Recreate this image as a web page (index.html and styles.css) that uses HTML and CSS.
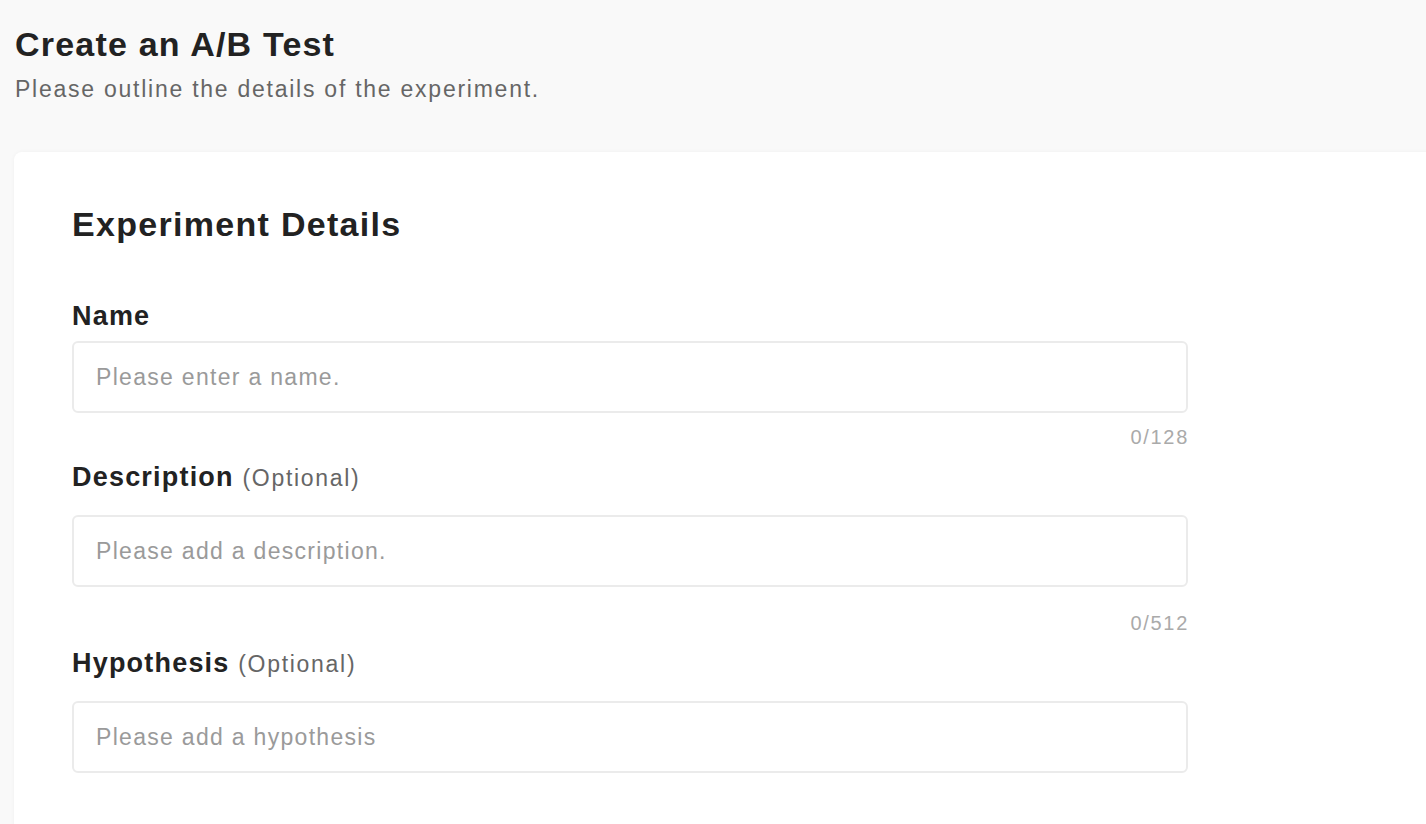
FILE: index.html
```html
<!DOCTYPE html>
<html lang="en">
<head>
<meta charset="utf-8">
<title>Create an A/B Test</title>
<link rel="stylesheet" href="styles.css">
</head>
<body>
<div class="page">
  <header class="page-header">
    <h1 class="page-title">Create an A/B Test</h1>
    <p class="page-subtitle">Please outline the details of the experiment.</p>
  </header>
  <section class="card">
    <h2 class="card-title">Experiment Details</h2>
    <form class="form">
      <div class="field">
        <label class="field-label" for="name">Name</label>
        <input class="field-input" id="name" type="text" placeholder="Please enter a name.">
        <div class="field-counter">0/128</div>
      </div>
      <div class="field">
        <label class="field-label field-label--optional" for="desc">Description <span class="optional">(Optional)</span></label>
        <input class="field-input" id="desc" type="text" placeholder="Please add a description.">
        <div class="field-counter field-counter--spaced">0/512</div>
      </div>
      <div class="field">
        <label class="field-label field-label--optional" for="hyp">Hypothesis <span class="optional">(Optional)</span></label>
        <input class="field-input" id="hyp" type="text" placeholder="Please add a hypothesis">
      </div>
    </form>
  </section>
</div>
</body>
</html>
```
FILE: styles.css
```css
html, body {
  margin: 0;
  padding: 0;
  background: #f9f9f9;
  overflow: hidden;
}
body {
  font-family: "Liberation Sans", Arial, Helvetica, sans-serif;
  color: #222;
}
.page {
  display: flex;
  flex-direction: column;
}
.page-header {
  padding: 24px 15px 0 15px;
  height: 152px;
  box-sizing: border-box;
}
.page-title {
  margin: 0;
  font-size: 34px;
  line-height: 40px;
  font-weight: 700;
  letter-spacing: 1.2px;
  color: #222;
}
.page-subtitle {
  margin: 11px 0 0 0;
  font-size: 23px;
  line-height: 28px;
  letter-spacing: 1.75px;
  color: #666;
}
.card {
  margin-left: 14px;
  margin-right: -20px;
  background: #fff;
  border-radius: 8px;
  box-shadow: 0 0 4px rgba(0, 0, 0, 0.04);
  padding: 52px 0 0 58px;
  min-height: 700px;
}
.card-title {
  margin: 0;
  font-size: 34px;
  line-height: 40px;
  font-weight: 700;
  letter-spacing: 1.3px;
  color: #222;
}
.form {
  margin-top: 56px;
  width: 1116px;
  display: flex;
  flex-direction: column;
}
.field {
  display: flex;
  flex-direction: column;
}
.field-label {
  font-size: 27px;
  line-height: 32px;
  font-weight: 700;
  letter-spacing: 1.2px;
  color: #222;
  margin-bottom: 9px;
}
.field-label--optional {
  margin-bottom: 21px;
}
.optional {
  font-weight: 400;
  font-size: 23px;
  color: #666;
  letter-spacing: 1.7px;
}
.field-input {
  box-sizing: border-box;
  height: 72px;
  width: 100%;
  border: 2px solid #ebebeb;
  border-radius: 6px;
  padding: 0 22px;
  font-family: inherit;
  font-size: 23px;
  letter-spacing: 1.3px;
  color: #222;
  background: #fff;
  outline: none;
}
.field-input::placeholder {
  color: #9a9a9a;
}
.field-counter {
  text-align: right;
  font-size: 20px;
  line-height: 24px;
  letter-spacing: 1.7px;
  margin-right: -1px;
  color: #aaa;
  margin-top: 12px;
  margin-bottom: 12px;
}
.field-counter--spaced {
  margin-top: 24px;
}
```
